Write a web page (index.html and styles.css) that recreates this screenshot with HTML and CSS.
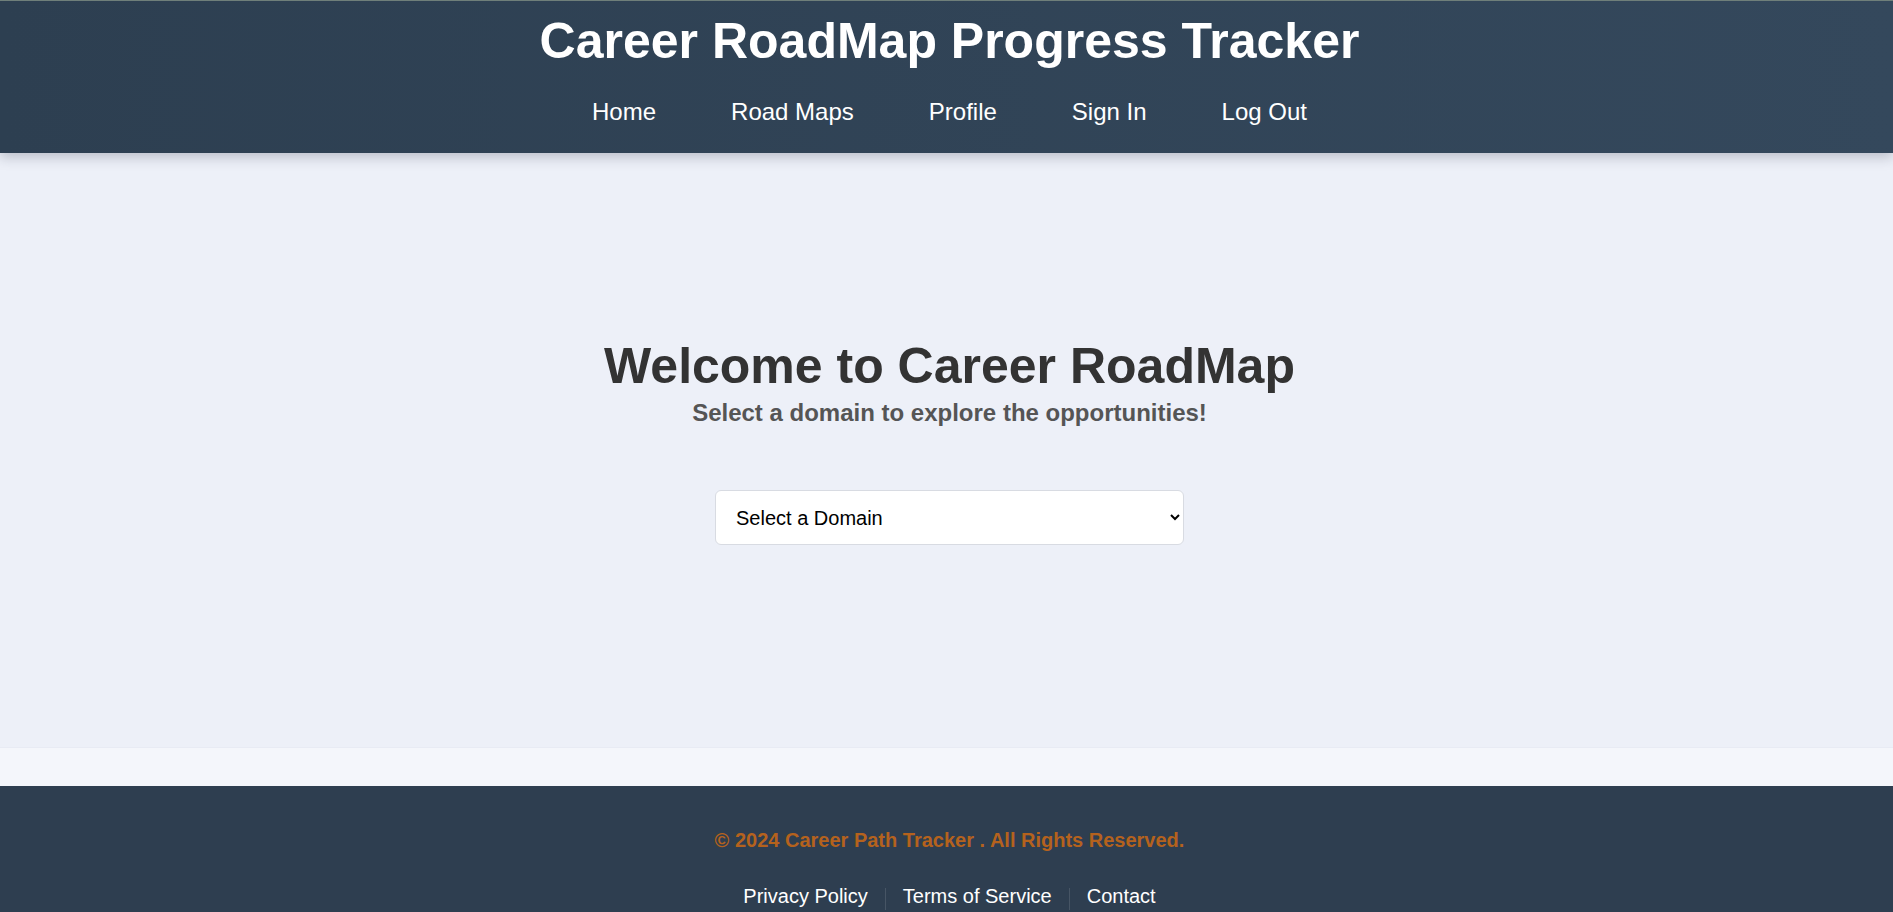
FILE: index.html
```html
<!DOCTYPE html>
<html lang="en">
<head>
<meta charset="utf-8">
<title>Career RoadMap Progress Tracker</title>
<link rel="stylesheet" href="styles.css">
</head>
<body>
<header class="site-header">
  <h1 class="site-title">Career RoadMap Progress Tracker</h1>
  <nav class="main-nav">
    <a href="#">Home</a>
    <a href="#">Road Maps</a>
    <a href="#">Profile</a>
    <a href="#">Sign In</a>
    <a href="#">Log Out</a>
  </nav>
</header>
<main class="hero">
  <h2 class="hero-title">Welcome to Career RoadMap</h2>
  <p class="hero-sub">Select a domain to explore the opportunities!</p>
  <select class="domain-select">
    <option>Select a Domain</option>
    <option>Web Development</option>
    <option>Data Science</option>
  </select>
</main>
<div class="spacer"></div>
<footer class="site-footer">
  <p class="copyright">© 2024 Career Path Tracker . All Rights Reserved.</p>
  <div class="footer-links">
    <a href="#">Privacy Policy</a>
    <span class="sep"></span>
    <a href="#">Terms of Service</a>
    <span class="sep"></span>
    <a href="#">Contact</a>
  </div>
</footer>
</body>
</html>
```
FILE: styles.css
```css
* { box-sizing: border-box; }
html, body { margin: 0; padding: 0; }
body {
  font-family: "Liberation Sans", Arial, sans-serif;
  background: #f4f6fb;
}
.site-header {
  position: relative;
  z-index: 2;
  background: linear-gradient(90deg, #2d3f51, #34485c);
  border-top: 1px solid #6f7f7a;
  padding: 12px 0 27px 6px;
  text-align: center;
  box-shadow: 0 4px 12px rgba(30, 40, 60, 0.25);
}
.site-title {
  margin: 0;
  color: #fff;
  font-size: 50px;
  line-height: 57px;
  font-weight: bold;
}
.main-nav {
  margin-top: 28px;
  display: flex;
  justify-content: center;
  gap: 75px;
}
.main-nav a {
  color: #fff;
  text-decoration: none;
  font-size: 24px;
  line-height: 28px;
}
.hero {
  background: #edf0f8;
  height: 595px;
  padding: 185px 0 0 6px;
  display: flex;
  flex-direction: column;
  align-items: center;
  border-bottom: 1px solid #e8ebf4;
}
.hero-title {
  margin: 0;
  color: #333;
  font-size: 50px;
  line-height: 57px;
  font-weight: bold;
}
.hero-sub {
  margin: 4px 0 0;
  color: #555;
  font-size: 24px;
  line-height: 28px;
  font-weight: bold;
}
.domain-select {
  margin-top: 63px;
  width: 469px;
  height: 55px;
  padding: 0 8px 0 16px;
  font-family: "Liberation Sans", Arial, sans-serif;
  font-size: 20px;
  color: #000;
  background: #fff;
  border: 1px solid #d8dbe2;
  border-radius: 6px;
}
.spacer {
  height: 38px;
  background: #f4f6fb;
}
.site-footer {
  background: #2e3e50;
  padding: 43px 0 20px 6px;
  text-align: center;
}
.copyright {
  margin: 0;
  color: #b5621d;
  font-size: 20px;
  line-height: 23px;
  font-weight: bold;
}
.footer-links {
  margin-top: 30px;
  display: flex;
  justify-content: center;
  align-items: center;
  gap: 17px;
}
.footer-links a {
  color: #fff;
  text-decoration: none;
  font-size: 20px;
  line-height: 23px;
}
.sep {
  width: 1px;
  height: 22px;
  margin-top: 6px;
  background: rgba(255, 255, 255, 0.12);
}
```
